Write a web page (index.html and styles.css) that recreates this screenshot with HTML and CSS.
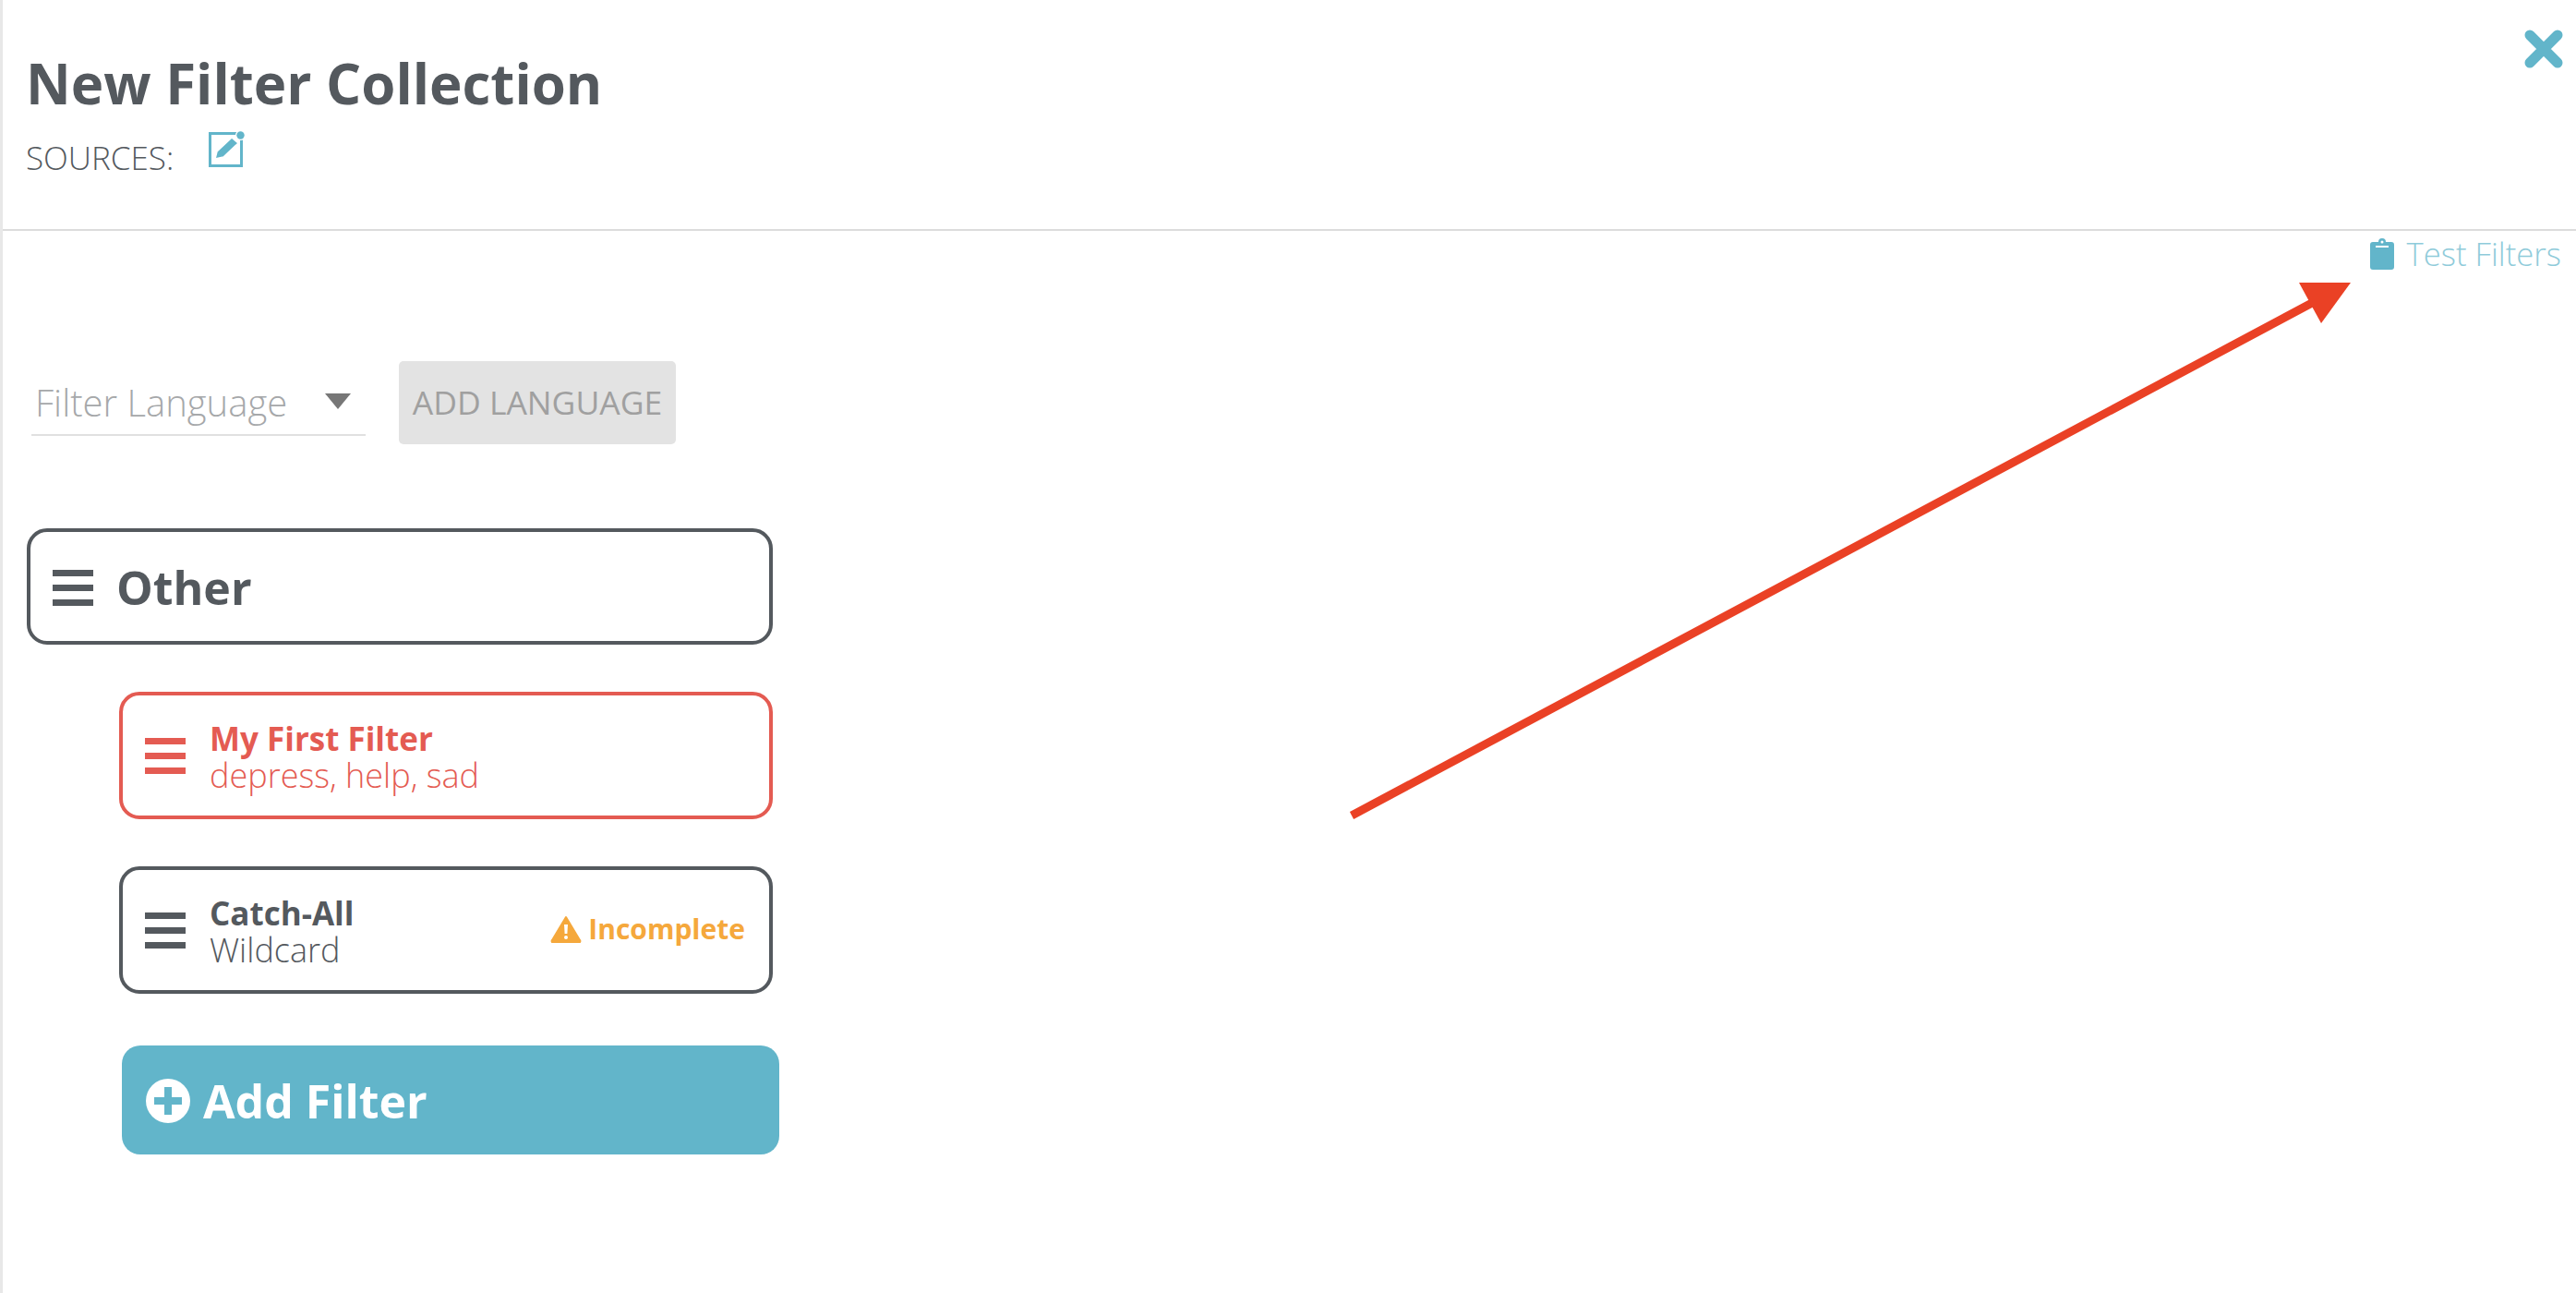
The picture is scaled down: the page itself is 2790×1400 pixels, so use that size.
FILE: index.html
```html
<!DOCTYPE html>
<html lang="en">
<head>
<meta charset="utf-8">
<title>New Filter Collection</title>
<link rel="stylesheet" href="styles.css">
</head>
<body>
<div class="modal">
  <header class="head">
    <div class="head-main">
      <h1 class="title">New Filter Collection</h1>
      <div class="sources">
        <span class="sources-label">SOURCES:</span>
        <svg class="edit-icon" viewBox="0 0 40 42" width="40" height="42"><rect x="1.500" y="4.500" width="34" height="35" fill="none" stroke="#62b5ca" stroke-width="3"/><path d="M7 32l2-8L25 9l7 6-16 15z" fill="#62b5ca" stroke="#fff" stroke-width="1.500"/><circle cx="34.500" cy="6.500" r="5.500" fill="#fff"/><circle cx="34.500" cy="6.500" r="4.200" fill="#62b5ca"/></svg>
      </div>
    </div>
    <svg class="close-icon" viewBox="0 0 42 42" width="42" height="42"><path d="M6 6l30 30M36 6L6 36" stroke="#62b5ca" stroke-width="11" stroke-linecap="round"/></svg>
  </header>
  <div class="tools">
    <a class="test-link">
      <svg class="clip-icon" viewBox="0 0 26 34" width="26" height="34"><path d="M3 4h6a4 4 0 0 1 8 0h6a3 3 0 0 1 3 3v24a3 3 0 0 1-3 3H3a3 3 0 0 1-3-3V7a3 3 0 0 1 3-3z" fill="#62b5ca"/><rect x="6" y="8" width="14" height="2" fill="#fff"/><circle cx="13" cy="4" r="1.500" fill="#fff"/></svg>
      <span>Test Filters</span>
    </a>
  </div>
  <div class="language-row">
    <div class="select">
      <span>Filter Language</span>
      <i class="caret"></i>
    </div>
    <button class="add-language">ADD LANGUAGE</button>
  </div>
  <div class="group">
    <svg class="burger burger-lg" viewBox="0 0 44 39" width="44" height="39"><path d="M0 0h44v7H0zM0 16h44v7H0zM0 32h44v7H0z" fill="#54595e"/></svg>
    <span class="group-name">Other</span>
  </div>
  <div class="filter filter-error">
    <svg class="burger" viewBox="0 0 44 39" width="44" height="39"><path d="M0 0h44v7H0zM0 16h44v7H0zM0 32h44v7H0z" fill="#e45b52"/></svg>
    <div class="filter-text">
      <div class="filter-name">My First Filter</div>
      <div class="filter-desc">depress, help, sad</div>
    </div>
  </div>
  <div class="filter">
    <svg class="burger" viewBox="0 0 44 39" width="44" height="39"><path d="M0 0h44v7H0zM0 16h44v7H0zM0 32h44v7H0z" fill="#54595e"/></svg>
    <div class="filter-text">
      <div class="filter-name">Catch-All</div>
      <div class="filter-desc">Wildcard</div>
    </div>
    <div class="status">
      <svg class="warn-icon" viewBox="0 0 34 30" width="34" height="30"><path d="M17 2L32 27a1.500 1.500 0 0 1-1.300 2.500H3.300A1.500 1.500 0 0 1 2 27z" fill="#f5a83c" stroke="#f5a83c" stroke-linejoin="round" stroke-width="2"/><path d="M15 10h4l-.6 10h-2.800z" fill="#fff"/><circle cx="17" cy="24" r="2" fill="#fff"/></svg>
      <span>Incomplete</span>
    </div>
  </div>
  <button class="add-filter">
    <svg class="plus-icon" viewBox="0 0 48 48" width="48" height="48"><circle cx="24" cy="24" r="24" fill="#fff"/><path d="M20 9h8v11h11v8H28v11h-8V28H9v-8h11z" fill="#62b5ca"/></svg>
    <span>Add Filter</span>
  </button>
  <svg class="arrow" viewBox="0 0 2790 1400" width="2790" height="1400"><path d="M1464 883L2504 328" stroke="#ea4125" stroke-width="9" fill="none"/><path d="M2490 306H2546L2514 350L2503 330z" fill="#ea4125"/></svg>
</div>
</body>
</html>
```
FILE: styles.css
```css
* { box-sizing: border-box; }
html, body { margin: 0; padding: 0; background: #fff; }
body { width: 2790px; height: 1400px; overflow: hidden; font-family: "Open Sans", sans-serif; color: #54595e; }
.modal { position: relative; width: 2790px; height: 1400px; border-left: 3px solid #e8e8e8; }

.head { height: 250px; border-bottom: 2px solid #dcdcdc; padding: 26px 14px 0 25px; display: flex; justify-content: space-between; align-items: flex-start; }
.title { margin: 26px 0 0 0; font-size: 60px; line-height: 76px; font-weight: 700; color: #54595e; }
.sources { display: flex; align-items: flex-start; margin-top: 0; }
.sources-label { font-size: 35px; line-height: 44px; font-weight: 300; margin-top: 21px; width: 198px; }
.edit-icon { display: block; margin-top: 12px; }
.close-icon { display: block; margin-top: 6px; }

.tools { display: flex; justify-content: flex-end; padding: 8px 16px 0 0; }
.test-link { display: flex; align-items: center; gap: 14px; font-size: 34.700px; line-height: 34px; font-weight: 300; color: #8fcbda; }

.language-row { display: flex; align-items: flex-end; margin: 98px 0 0 31px; }
.select { width: 362px; height: 82px; border-bottom: 2px solid #e0e0e0; display: flex; justify-content: space-between; align-items: center; padding: 11px 16px 0 4px; font-size: 40px; font-weight: 300; color: #a6a8aa; }
.caret { width: 0; height: 0; border-left: 14px solid transparent; border-right: 14px solid transparent; border-top: 17px solid #777; margin-top: -3px; }
.add-language { width: 300px; height: 90px; margin-left: 36px; margin-bottom: -9px; border: 0; border-radius: 5px; background: #e3e3e3; color: #a0a0a0; font-family: inherit; font-size: 35.500px; font-weight: 400; padding: 0 0 3px; }

.group { width: 808px; height: 126px; margin: 100px 0 0 26px; border: 4px solid #54595e; border-radius: 22px; display: flex; align-items: center; padding: 2px 0 0 24px; }
.burger { display: block; flex: none; }
.group-name { margin-left: 25px; font-size: 50px; font-weight: 700; line-height: 60px; }

.filter { width: 708px; height: 138px; margin: 51px 0 0 126px; border: 4px solid #54595e; border-radius: 22px; display: flex; align-items: center; padding: 0 26px 0 24px; color: #54595e; }
.filter-error { border-color: #e45b52; color: #e45b52; }
.filter-text { margin-left: 26px; padding-top: 4px; }
.filter-name { font-size: 35px; line-height: 40px; font-weight: 700; }
.filter-desc { font-size: 36px; line-height: 40px; font-weight: 300; }
.status { margin-left: auto; display: flex; align-items: center; gap: 7px; color: #f5a83c; font-size: 30px; font-weight: 700; line-height: 34px; margin-top: -3px; }
.warn-icon { display: block; }

.add-filter { display: flex; align-items: center; width: 712px; height: 118px; margin: 56px 0 0 129px; border: 0; border-radius: 20px; background: #62b5ca; color: #fff; font-family: inherit; font-size: 50px; font-weight: 700; padding: 2px 0 0 26px; gap: 14px; }
.plus-icon { display: block; }

.arrow { position: absolute; left: -3px; top: 0; pointer-events: none; }
```
